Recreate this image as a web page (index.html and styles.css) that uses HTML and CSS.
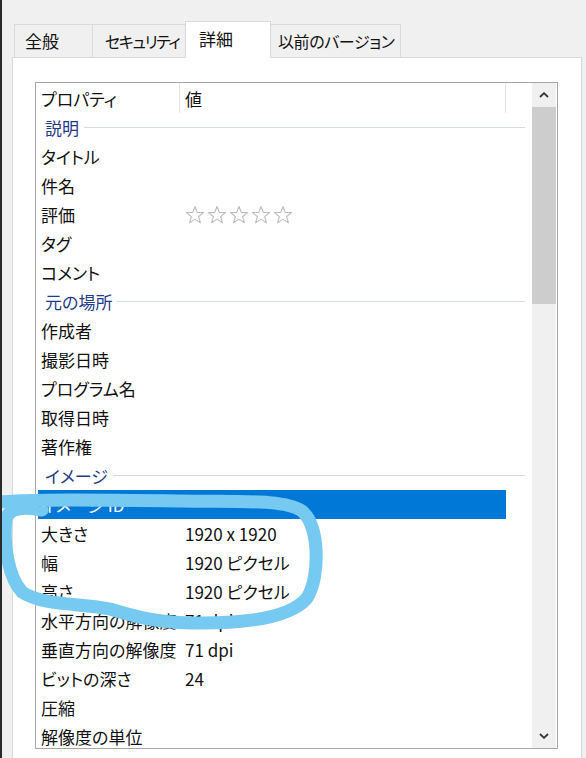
FILE: index.html
```html
<!DOCTYPE html>
<html lang="ja">
<head>
    <meta charset="UTF-8">
    <title>プロパティ - 詳細</title>
    <link rel="stylesheet" href="styles.css">
</head>
<body>
    <div class="window">
        <div class="tabs">
            <div class="tab tab-general">全般</div>
            <div class="tab tab-security">セキュリティ</div>
            <div class="tab tab-details active">詳細</div>
            <div class="tab tab-versions">以前のバージョン</div>
        </div>

        <div class="panel">
            <div class="listbox">
                <div class="list">
                    <div class="header">
                        <div class="col-name">プロパティ</div>
                        <div class="col-value">値</div>
                        <div class="col-rest"></div>
                    </div>

                    <div class="group"><span>説明</span></div>
                    <div class="row"><div class="col-name">タイトル</div><div class="col-value"></div></div>
                    <div class="row"><div class="col-name">件名</div><div class="col-value"></div></div>
                    <div class="row">
                        <div class="col-name">評価</div>
                        <div class="col-value stars">
                            <svg class="star" viewBox="0 0 20 20"><polygon points="10,1.5 12.3,7.4 18.6,7.6 13.6,11.5 15.4,17.7 10,14.1 4.6,17.7 6.4,11.5 1.4,7.6 7.7,7.4"/></svg>
                            <svg class="star" viewBox="0 0 20 20"><polygon points="10,1.5 12.3,7.4 18.6,7.6 13.6,11.5 15.4,17.7 10,14.1 4.6,17.7 6.4,11.5 1.4,7.6 7.7,7.4"/></svg>
                            <svg class="star" viewBox="0 0 20 20"><polygon points="10,1.5 12.3,7.4 18.6,7.6 13.6,11.5 15.4,17.7 10,14.1 4.6,17.7 6.4,11.5 1.4,7.6 7.7,7.4"/></svg>
                            <svg class="star" viewBox="0 0 20 20"><polygon points="10,1.5 12.3,7.4 18.6,7.6 13.6,11.5 15.4,17.7 10,14.1 4.6,17.7 6.4,11.5 1.4,7.6 7.7,7.4"/></svg>
                            <svg class="star" viewBox="0 0 20 20"><polygon points="10,1.5 12.3,7.4 18.6,7.6 13.6,11.5 15.4,17.7 10,14.1 4.6,17.7 6.4,11.5 1.4,7.6 7.7,7.4"/></svg>
                        </div>
                    </div>
                    <div class="row"><div class="col-name">タグ</div><div class="col-value"></div></div>
                    <div class="row"><div class="col-name">コメント</div><div class="col-value"></div></div>

                    <div class="group"><span>元の場所</span></div>
                    <div class="row"><div class="col-name">作成者</div><div class="col-value"></div></div>
                    <div class="row"><div class="col-name">撮影日時</div><div class="col-value"></div></div>
                    <div class="row"><div class="col-name">プログラム名</div><div class="col-value"></div></div>
                    <div class="row"><div class="col-name">取得日時</div><div class="col-value"></div></div>
                    <div class="row"><div class="col-name">著作権</div><div class="col-value"></div></div>

                    <div class="group"><span>イメージ</span></div>
                    <div class="row selected"><div class="col-name">イメージ ID</div><div class="col-value"></div></div>
                    <div class="row"><div class="col-name">大きさ</div><div class="col-value">1920 x 1920</div></div>
                    <div class="row"><div class="col-name">幅</div><div class="col-value">1920 ピクセル</div></div>
                    <div class="row"><div class="col-name">高さ</div><div class="col-value">1920 ピクセル</div></div>
                    <div class="row"><div class="col-name">水平方向の解像度</div><div class="col-value">71 dpi</div></div>
                    <div class="row"><div class="col-name">垂直方向の解像度</div><div class="col-value">71 dpi</div></div>
                    <div class="row"><div class="col-name">ビットの深さ</div><div class="col-value">24</div></div>
                    <div class="row"><div class="col-name">圧縮</div><div class="col-value"></div></div>
                    <div class="row"><div class="col-name">解像度の単位</div><div class="col-value"></div></div>
                </div>

                <div class="scrollbar">
                    <div class="scroll-btn">
                        <svg viewBox="0 0 10 6"><polyline points="1,5 5,1.2 9,5"/></svg>
                    </div>
                    <div class="scroll-thumb"></div>
                    <div class="scroll-track"></div>
                    <div class="scroll-btn">
                        <svg viewBox="0 0 10 6"><polyline points="1,1 5,4.8 9,1"/></svg>
                    </div>
                </div>
            </div>
        </div>

        <!-- 手書きの丸（スクリーンショット上の注記） -->
        <svg class="annotation" viewBox="0 0 586 758">
            <path d="M 0 502 C 40 499, 100 500, 180 501 C 240 502, 285 499, 302 511 C 320 526, 320 578, 307 598 C 292 616, 252 624, 192 623 C 150 622, 126 614, 110 609 C 82 603, 42 606, 22 592 C 8 577, 3 542, 6 520 C 8 509, 20 506, 42 510"/>
        </svg>
    </div>
</body>
</html>
```

FILE: styles.css
```css
body {
    margin: 0;
    font-family: "Noto Sans CJK JP", "Noto Sans", sans-serif;
    font-feature-settings: "palt";
    color: #111;
}
.window {
    position: relative;
    width: 584px;
    height: 758px;
    border-left: 2px solid #2a2a2a;
    background-color: #f0f0f0;
    overflow: hidden;
}
.tabs {
    display: flex;
    align-items: flex-end;
    height: 57px;
    padding-left: 12px;
    box-sizing: border-box;
}
.tab {
    height: 33px;
    line-height: 32px;
    font-size: 17px;
    white-space: nowrap;
    background-color: #f0f0f0;
    border: 1px solid #dadada;
    border-bottom: none;
    box-sizing: border-box;
    margin-right: -1px;
}
.tab-general { width: 79px; padding-left: 10px; }
.tab-security { width: 94px; padding-left: 12px; font-size: 16px; letter-spacing: -1.4px; }
.tab-details { width: 86px; padding-left: 13px; }
.tab-versions { width: 131px; padding-left: 7px; font-size: 16px; letter-spacing: -0.4px; }
.tab.active {
    position: relative;
    z-index: 1;
    height: 37px;
    line-height: 34px;
    margin-bottom: -1px;
    background-color: #fff;
}
.panel {
    margin-left: 10px;
    width: 570px;
    height: 702px;
    border: 1px solid #d9d9d9;
    background-color: #fff;
    box-sizing: border-box;
    padding: 24px 0 0 22px;
}
.listbox {
    display: flex;
    width: 523px;
    height: 667px;
    border: 1px solid #a6a6a6;
    box-sizing: border-box;
    background-color: #fff;
}
.list {
    flex: 1;
    overflow: hidden;
}
.header {
    display: flex;
    height: 30px;
    line-height: 31px;
    font-size: 17px;
}
.header .col-name,
.header .col-value {
    border-right: 1px solid #e5e5e5;
}
.header .col-rest {
    width: 26px;
}
.col-name {
    width: 144px;
    padding-left: 5px;
    box-sizing: border-box;
    white-space: nowrap;
}
.col-value {
    width: 326px;
    padding-left: 5px;
    box-sizing: border-box;
    white-space: nowrap;
}
.row {
    display: flex;
    width: 468px;
    margin-left: 2px;
    height: 29px;
    line-height: 29px;
    font-size: 17px;
}
.row .col-name {
    width: 142px;
    padding-left: 3px;
}
.row.selected {
    background-color: #0078d7;
    color: #fff;
}
.group {
    display: flex;
    align-items: center;
    width: 489px;
    height: 29px;
    padding-left: 9px;
    box-sizing: border-box;
    font-size: 17px;
    color: #1f3a86;
}
.group::after {
    content: "";
    flex: 1;
    height: 1px;
    margin-left: 5px;
    background-color: #d2dae3;
}
.stars {
    display: flex;
    align-items: center;
    gap: 2px;
}
.star {
    width: 20px;
    height: 20px;
}
.star polygon {
    fill: #fff;
    stroke: #bdbdbd;
    stroke-width: 1.1;
    stroke-linejoin: round;
}
.scrollbar {
    display: flex;
    flex-direction: column;
    width: 24px;
    margin-right: 1px;
    background-color: #f0f0f0;
}
.scroll-btn {
    height: 24px;
    display: flex;
    align-items: center;
    justify-content: center;
}
.scroll-btn svg {
    width: 10px;
    height: 6px;
}
.scroll-btn polyline {
    fill: none;
    stroke: #333;
    stroke-width: 1.8;
}
.scroll-thumb {
    height: 197px;
    background-color: #cdcdcd;
}
.scroll-track {
    flex: 1;
}
.annotation {
    position: absolute;
    left: -2px;
    top: 0;
    width: 586px;
    height: 758px;
    pointer-events: none;
    z-index: 2;
}
.annotation path {
    fill: none;
    stroke: #76c9f1;
    stroke-width: 13;
    stroke-linecap: round;
    stroke-linejoin: round;
}
```
